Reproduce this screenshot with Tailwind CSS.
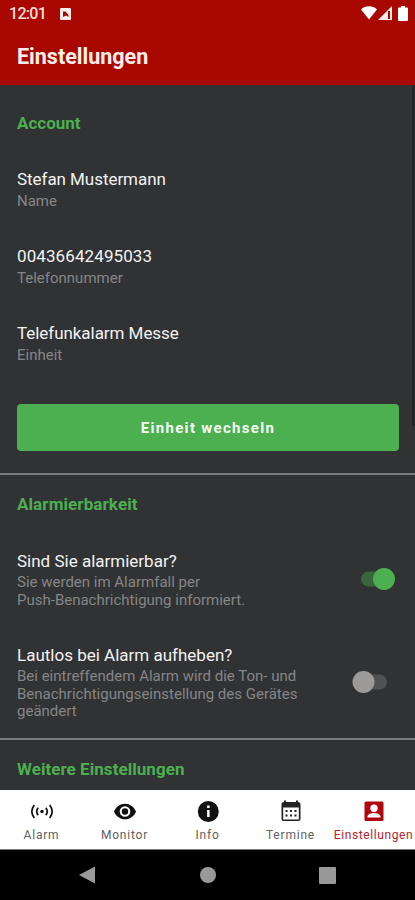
<!DOCTYPE html>
<html lang="de">
<head>
  <meta charset="UTF-8" />
  <meta name="viewport" content="width=device-width, initial-scale=1" />
  <title>Einstellungen</title>
  <script src="https://cdn.jsdelivr.net/npm/@tailwindcss/browser@4"></script>
</head>
<body class="w-[415px] h-[900px] overflow-hidden flex flex-col bg-[#313234] font-[Roboto,sans-serif] whitespace-nowrap">

  <header class="h-[85px] shrink-0 bg-[#a90800] text-white">
    <div class="h-7 flex items-center pl-[9px] pr-[7px]">
      <span class="w-[36px] text-[16px] tracking-[-0.7px] font-medium text-[#ffdeda]">12:01</span>
      <svg class="ml-[15px] mb-px w-[11px] h-[12px]" viewBox="0 0 11 12">
        <rect width="11" height="12" rx="1" fill="#ffeeeb" />
        <path d="M3 9V3.500h2.500L8.500 7v2L6 7.500z" fill="#a90800" />
      </svg>
      <svg class="ml-auto mb-[2px] w-4 h-[14px]" viewBox="0 0 16 14" fill="#fff">
        <path d="M0 3.500C4-.9 12-.9 16 3.500L8 13.500z" />
      </svg>
      <svg class="ml-px mb-[2px] w-[14px] h-[14px]" viewBox="0 0 14 14">
        <path d="M0 14L14 0v14z" fill="#ffeeeb" />
        <path d="M10 5v8h2V5z" fill="#a90800" />
      </svg>
      <svg class="ml-[6px] mb-[2px] w-[10px] h-[15px]" viewBox="0 0 10 15" fill="#fff">
        <path d="M3 0h4v1.500h2q1 0 1 1V14q0 1-1 1H1q-1 0-1-1V2.500q0-1 1-1h2z" />
      </svg>
    </div>
    <h1 class="mt-[14px] pl-[17px] text-[21.500px] leading-[30px] font-bold text-[#ffeeeb]">Einstellungen</h1>
  </header>

  <main class="relative h-[705px] shrink-0 overflow-hidden text-[#f2f2f2]">
    <!-- scrollbar -->
    <div class="absolute right-0 top-0 w-[3px] h-[341px] bg-[#242527]"></div>

    <section class="h-[388px] px-[17px] pt-[26px]">
      <h2 class="text-[17px] leading-6 font-bold text-[#4caf50]">Account</h2>
      <div class="mt-8 flex flex-col gap-[34px]">
        <div>
          <p class="text-[17px] leading-6 tracking-[-0.05px]">Stefan Mustermann</p>
          <p class="mt-px text-[15px] leading-[18px] text-[#858686]">Name</p>
        </div>
        <div>
          <p class="text-[17px] leading-6 tracking-[0.1px]">00436642495033</p>
          <p class="mt-px text-[15px] leading-[18px] text-[#858686]">Telefonnummer</p>
        </div>
        <div>
          <p class="text-[17px] leading-6 tracking-[-0.05px]">Telefunkalarm Messe</p>
          <p class="mt-px text-[15px] leading-[18px] text-[#858686]">Einheit</p>
        </div>
      </div>
      <button class="mt-10 block w-[382px] h-[47px] pt-px rounded-[4px] bg-[#4caf50] text-[15px] font-bold tracking-[1.3px] text-[#f5fff5]">Einheit wechseln</button>
    </section>

    <section class="h-[265px] border-t-2 border-[#7b7c7d] px-[17px] pt-[17px]">
      <h2 class="text-[17px] leading-6 font-bold tracking-[0.1px] text-[#4caf50]">Alarmierbarkeit</h2>
      <div class="mt-[33px] flex justify-between">
        <div>
          <p class="text-[17px] leading-6">Sind Sie alarmierbar?</p>
          <p class="text-[15px] leading-[18px] text-[#858686]">Sie werden im Alarmfall per<br />Push-Benachrichtigung informiert.</p>
        </div>
        <svg class="mt-[18px] mr-[3px] w-9 h-6" viewBox="0 0 36 24">
          <rect x="2" y="4.500" width="30" height="15" rx="7.500" fill="#39663d" />
          <circle cx="25" cy="12" r="11" fill="#4caf50" />
        </svg>
      </div>
      <div class="mt-[34px] flex justify-between">
        <div>
          <p class="text-[17px] leading-6">Lautlos bei Alarm aufheben?</p>
          <p class="mt-px text-[15px] leading-[17.700px] text-[#858686]">Bei eintreffendem Alarm wird die Ton- und<br />Benachrichtigungseinstellung des Gerätes<br />geändert</p>
        </div>
        <svg class="mt-[27px] mr-[10px] w-9 h-6" viewBox="0 0 36 24">
          <rect x="5" y="4.500" width="30" height="15" rx="7.500" fill="#505153" />
          <circle cx="11.500" cy="12" r="11" fill="#9b9a98" />
        </svg>
      </div>
    </section>

    <section class="h-[52px] border-t-2 border-[#7b7c7d] px-[17px] pt-[17px]">
      <h2 class="text-[17px] leading-6 font-bold tracking-[0.05px] text-[#4caf50]">Weitere Einstellungen</h2>
    </section>
  </main>

  <nav class="h-[60px] shrink-0 grid grid-cols-5 bg-white border-b border-[#777] pt-[9px] text-[12px] leading-4 tracking-[0.8px] text-[#616161]">
    <a class="flex flex-col items-center gap-[4px]">
      <svg class="w-6 h-6" viewBox="0 0 24 24" fill="none" stroke="#111" stroke-width="1.700">
        <circle cx="12" cy="12.500" r="1.700" fill="#111" stroke="none" />
        <path d="M8.200 8.900q-3 3.600 0 7.200M15.800 8.900q3 3.600 0 7.200M4.300 6q-5 6.500 0 13M19.700 6q5 6.500 0 13" />
      </svg>
      <span>Alarm</span>
    </a>
    <a class="flex flex-col items-center gap-[4px]">
      <svg class="w-6 h-6" viewBox="0 0 24 24" fill="#111">
        <path fill-rule="evenodd" d="M12 4.700C7 4.700 2.730 7.900 1 12.500c1.730 4.600 6 7.800 11 7.800s9.270-3.200 11-7.800c-1.730-4.600-6-7.800-11-7.800zM12 17.800a5.300 5.300 0 1 1 0-10.600 5.300 5.300 0 0 1 0 10.600z" />
        <circle cx="12" cy="12.500" r="3.200" />
      </svg>
      <span>Monitor</span>
    </a>
    <a class="flex flex-col items-center gap-[4px]">
      <svg class="w-6 h-6" viewBox="0 0 24 24" fill="#111">
        <path fill-rule="evenodd" d="M12.300 2a10.500 10.500 0 1 0 0 21 10.500 10.500 0 0 0 0-21zM13.600 18h-2.500v-7h2.500zM13.600 9h-2.500V6.600h2.500z" />
      </svg>
      <span>Info</span>
    </a>
    <a class="flex flex-col items-center gap-[4px]">
      <svg class="w-6 h-6" viewBox="0 0 24 24" fill="#222">
        <path fill-rule="evenodd" d="M5 1.500h2v1.500h10V1.500h2v1.500q2.500 0 2.500 2.500v14.500q0 2-2 2H4.500q-2 0-2-2V5.500Q2.500 3 5 3zM4.200 8.500V20.500h15.600V8.500z" />
        <path d="M6.500 11h2v2h-2zM11 11h2v2h-2zM15.500 11h2v2h-2zM6.500 15.500h2v2h-2zM11 15.500h2v2h-2zM15.500 15.500h2v2h-2z" />
      </svg>
      <span>Termine</span>
    </a>
    <a class="flex flex-col items-center gap-[4px] text-[#b5232f]">
      <svg class="w-6 h-6" viewBox="0 0 24 24" fill="#b00610">
        <path fill-rule="evenodd" d="M4 2.500h16q1.500 0 1.500 1.500v16.500q0 1.500-1.500 1.500H4q-1.500 0-1.500-1.500V4q0-1.500 1.500-1.500zM12 5.500a3.700 3.700 0 1 0 0 7.400A3.700 3.700 0 0 0 12 5.500zM5.500 18.500h13V17.500c0-2.500-4.100-3.500-6.500-3.500s-6.500 1-6.500 3.500z" />
      </svg>
      <span class="tracking-[0.6px]">Einstellungen</span>
    </a>
  </nav>

  <!-- Android navigation -->
  <footer class="h-[50px] shrink-0 flex items-center justify-between bg-black pl-[79px] pr-[79px]">
    <svg class="w-4 h-[18px]" viewBox="0 0 16 18" fill="#999"><path d="M0 9L16 .5v17z" /></svg>
    <span class="w-4 h-4 ml-px rounded-full bg-[#999]"></span>
    <span class="w-[17px] h-[17px] rounded-[1px] bg-[#999]"></span>
  </footer>

</body>
</html>
